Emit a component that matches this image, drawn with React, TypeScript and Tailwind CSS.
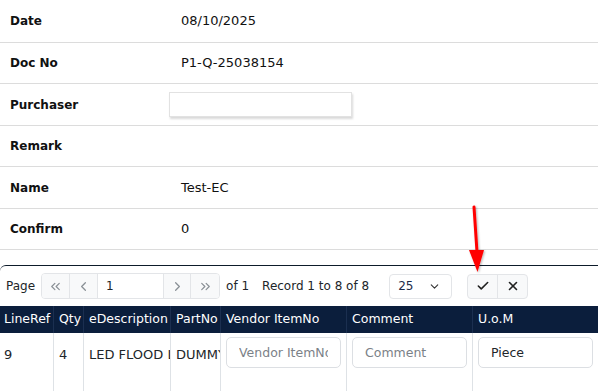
import { Check, ChevronLeft, ChevronRight, ChevronsLeft, ChevronsRight, ChevronDown, X } from "lucide-react";

const fields = [
  { label: "Date", value: "08/10/2025", h: "h-[43px]" },
  { label: "Doc No", value: "P1-Q-25038154", h: "h-[41px]" },
  { label: "Purchaser", value: null, h: "h-[42px]" },
  { label: "Remark", value: "", h: "h-[41px]" },
  { label: "Name", value: "Test-EC", h: "h-[42px]" },
  { label: "Confirm", value: "0", h: "h-[41px]" },
];

const columns = [
  { name: "LineRef", w: "w-[54px] pl-[4px]" },
  { name: "Qty", w: "w-[30px] pl-[5px]" },
  { name: "eDescription", w: "w-[87px] pl-[5px]" },
  { name: "PartNo", w: "w-[50px] pl-[5px]" },
  { name: "Vendor ItemNo", w: "w-[126px] pl-[5px]" },
  { name: "Comment", w: "w-[126px] pl-[5px]" },
  { name: "U.o.M", w: "w-[125px] pl-[5px]" },
];

const App = () => {
  return (
    <div
      className="relative h-[391px] w-[598px] overflow-hidden bg-white text-[#111]"
      style={{ fontFamily: '"DejaVu Sans", Verdana, sans-serif' }}
    >
      {/* header form */}
      <div>
        {fields.map((f) => (
          <div key={f.label} className={`flex items-center border-b border-[#dcdcdc] ${f.h}`}>
            <div className="w-[181px] pl-[10px] text-[12px] font-bold">{f.label}</div>
            {f.value === null ? (
              <div className="-ml-[12px] h-[25px] w-[183px] border border-[#e2e2e2] bg-white shadow-[1px_2px_2px_rgba(0,0,0,0.15)]" />
            ) : (
              <div className="text-[13px]">{f.value}</div>
            )}
          </div>
        ))}
      </div>

      {/* grid */}
      <div className="mt-[15px] rounded-tl-[6px] border-t border-t-[#0d1b2a]">
        <div className="flex h-[40px] items-center text-[12px] text-[#212529]">
          <span className="ml-[6px]">Page</span>
          <div className="ml-[6px] flex h-[26px] overflow-hidden rounded-[4px] border border-[#e3e5e8]">
            <button className="flex w-[28px] items-center justify-center border-r border-[#e3e5e8] bg-[#f8f9fa] text-[#8a9096]">
              <ChevronsLeft size={15} strokeWidth={2} />
            </button>
            <button className="flex w-[28px] items-center justify-center border-r border-[#e3e5e8] bg-[#f8f9fa] text-[#8a9096]">
              <ChevronLeft size={15} strokeWidth={2} />
            </button>
            <div className="flex w-[65px] items-center bg-white pl-[8px] text-[12px]">1</div>
            <button className="flex w-[28px] items-center justify-center border-l border-r border-[#e3e5e8] bg-[#f8f9fa] text-[#8a9096]">
              <ChevronRight size={15} strokeWidth={2} />
            </button>
            <button className="flex w-[28px] items-center justify-center bg-[#f8f9fa] text-[#8a9096]">
              <ChevronsRight size={15} strokeWidth={2} />
            </button>
          </div>
          <span className="ml-[6px]">of 1</span>
          <span className="ml-[13px]">Record 1 to 8 of 8</span>
          <div className="ml-[20px] flex h-[25px] w-[63px] items-center justify-between rounded-[4px] border border-[#e3e5e8] pl-[8px] pr-[10px]">
            <span className="text-[#1c2b4a]">25</span>
            <ChevronDown size={13} strokeWidth={2} className="text-[#333]" />
          </div>
          <div className="ml-[15px] flex h-[25px] overflow-hidden rounded-[4px] border border-[#e3e5e8] bg-[#f8f9fa]">
            <button className="flex w-[30px] items-center justify-center border-r border-[#e3e5e8] text-[#222]">
              <Check size={14} strokeWidth={2.75} />
            </button>
            <button className="flex w-[29px] items-center justify-center text-[#222]">
              <X size={14} strokeWidth={2.75} />
            </button>
          </div>
        </div>

        <div className="flex h-[27px] bg-[#0b1e3c] text-[12.5px] text-white">
          {columns.map((c, i) => (
            <div
              key={c.name}
              className={`flex shrink-0 items-center whitespace-nowrap ${c.w} ${i < columns.length - 1 ? "border-r border-[#1b2f50]" : ""}`}
            >
              {c.name}
            </div>
          ))}
        </div>

        <div className="flex h-[60px] text-[13px] text-[#212529]">
          <div className="w-[54px] border-r border-[#dee2e6] px-[4px] pt-[12px]">9</div>
          <div className="w-[30px] border-r border-[#dee2e6] px-[5px] pt-[12px]">4</div>
          <div className="w-[87px] overflow-hidden whitespace-nowrap border-r border-[#dee2e6] px-[5px] pt-[12px]">LED FLOOD LIGHT</div>
          <div className="w-[50px] overflow-hidden whitespace-nowrap border-r border-[#dee2e6] px-[5px] pt-[12px]">DUMMY</div>
          <div className="w-[126px] border-r border-[#dee2e6] px-[5px] pt-[4px]">
            <input
              placeholder="Vendor ItemNo"
              className="h-[31px] w-full rounded-[5px] border border-[#dcdfe3] px-[12px] text-[12.5px] outline-none placeholder:text-[#7b8187]"
            />
          </div>
          <div className="w-[126px] border-r border-[#dee2e6] px-[5px] pt-[4px]">
            <input
              placeholder="Comment"
              className="h-[31px] w-full rounded-[5px] border border-[#dcdfe3] px-[12px] text-[12.5px] outline-none placeholder:text-[#7b8187]"
            />
          </div>
          <div className="w-[125px] px-[5px] pt-[4px]">
            <input
              defaultValue="Piece"
              className="h-[31px] w-full rounded-[5px] border border-[#dcdfe3] px-[12px] text-[12.5px] text-[#212529] outline-none"
            />
          </div>
        </div>
      </div>

      {/* red annotation arrow */}
      <svg className="pointer-events-none absolute left-[460px] top-[200px]" width="40" height="80" viewBox="0 0 40 80">
        <defs>
          <filter id="sh" x="-50%" y="-50%" width="200%" height="200%">
            <feDropShadow dx="1" dy="1" stdDeviation="1" floodColor="#000" floodOpacity="0.3" />
          </filter>
        </defs>
        <g filter="url(#sh)">
          <path d="M14 7 L17 52" stroke="#ff0000" strokeWidth="3" strokeLinecap="round" />
          <path d="M9 50 L24 50 L17.5 72 Z" fill="#ff0000" />
        </g>
      </svg>
    </div>
  );
};

export default App;
